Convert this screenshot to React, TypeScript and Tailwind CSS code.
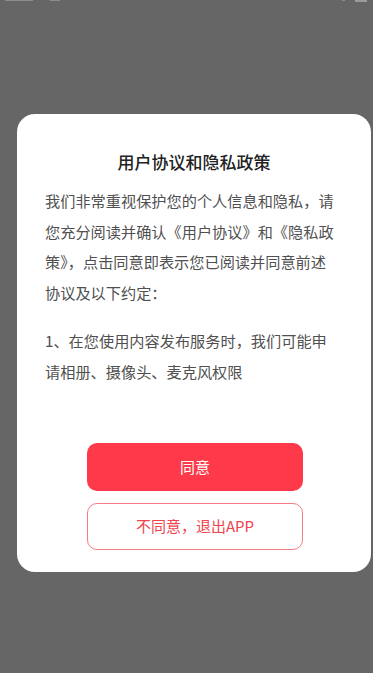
import React from "react";

const font = { fontFamily: '"Noto Sans CJK SC", "Noto Sans", sans-serif' };

export default function App() {
  const p1 = [
    "我们非常重视保护您的个人信息和隐私，请",
    "您充分阅读并确认《用户协议》和《隐私政",
    "策》，点击同意即表示您已阅读并同意前述",
    "协议及以下约定：",
  ];
  const p2 = ["1、在您使用内容发布服务时，我们可能申", "请相册、摄像头、麦克风权限"];
  return (
    <div className="w-[373px] h-[673px] bg-[#666666] flex flex-col overflow-hidden" style={font}>
      <div className="h-[2px] flex items-start">
        <div className="ml-[5px] w-[28px] h-[1px] bg-[#8c8c8c]" />
        <div className="ml-[17px] w-[10px] h-[1px] bg-[#8c8c8c]" />
        <div className="ml-auto w-[3px] h-[1px] bg-[#8c8c8c]" />
        <div className="ml-[10px] mr-[6px] w-[12px] h-[2px] bg-[#9a9a9a]" />
      </div>
      <div className="mt-[112px] ml-[17px] w-[354px] h-[458px] rounded-[18px] bg-white flex flex-col">
        <div className="pt-[36px] text-center text-[17px] leading-[24px] font-medium text-[#222222]">
          用户协议和隐私政策
        </div>
        <div className="mt-[11px] pl-[28px] text-[15.2px] leading-[30.5px] text-[#505050]">
          {p1.map((l) => (
            <div key={l} className="whitespace-nowrap">{l}</div>
          ))}
          <div className="h-[18px]" />
          {p2.map((l) => (
            <div key={l} className="whitespace-nowrap">{l}</div>
          ))}
        </div>
        <div className="mt-[57px] ml-[70px] w-[216px] flex flex-col gap-[12px]">
          <div className="h-[48px] rounded-[10px] bg-[#fe3a4a] flex items-center justify-center text-[15px] text-white">
            同意
          </div>
          <div className="h-[47px] rounded-[10px] border border-[#f47c86] bg-white flex items-center justify-center text-[15px] text-[#f0434f]">
            不同意，退出APP
          </div>
        </div>
      </div>
    </div>
  );
}
